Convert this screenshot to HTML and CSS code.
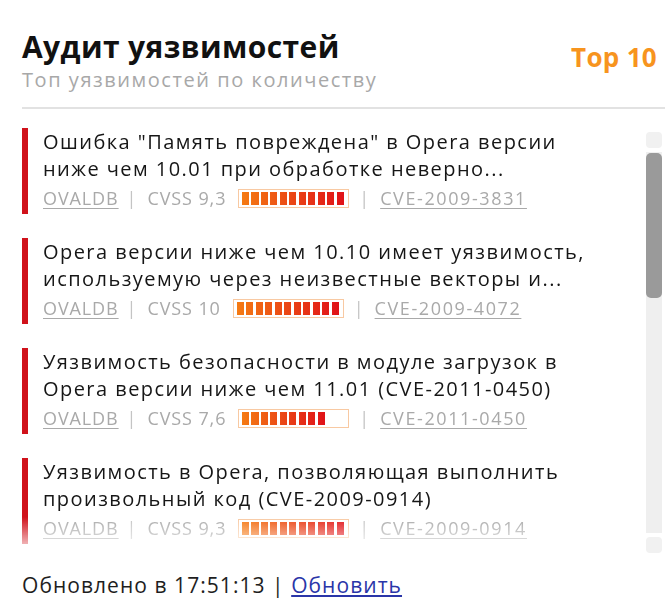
FILE: index.html
```html
<!DOCTYPE html>
<html lang="ru">
<head>
<meta charset="utf-8">
<title>Аудит уязвимостей</title>
<link rel="stylesheet" href="styles.css">
</head>
<body>
<div class="widget">
  <header class="head">
    <div class="head-titles">
      <h1 class="title">Аудит уязвимостей</h1>
      <div class="subtitle">Топ уязвимостей по количеству</div>
    </div>
    <div class="badge">Top 10</div>
  </header>

  <div class="body">
    <ul class="list">
      <li class="item">
        <div class="item-text">Ошибка "Память повреждена" в Opera версии ниже чем 10.01 при обработке неверно...</div>
        <div class="meta">
          <a class="link" href="#">OVALDB</a><span class="sep">|</span><span class="score">CVSS 9,3</span>
          <span class="gauge"><span class="fill" style="width:100%"></span></span>
          <span class="sep">|</span><a class="link cve" href="#">CVE-2009-3831</a>
        </div>
      </li>
      <li class="item">
        <div class="item-text">Opera версии ниже чем 10.10 имеет уязвимость, используемую через неизвестные векторы и...</div>
        <div class="meta">
          <a class="link" href="#">OVALDB</a><span class="sep">|</span><span class="score">CVSS 10</span>
          <span class="gauge"><span class="fill" style="width:100%"></span></span>
          <span class="sep">|</span><a class="link cve" href="#">CVE-2009-4072</a>
        </div>
      </li>
      <li class="item">
        <div class="item-text">Уязвимость безопасности в модуле загрузок в Opera версии ниже чем 11.01 (CVE-2011-0450)</div>
        <div class="meta">
          <a class="link" href="#">OVALDB</a><span class="sep">|</span><span class="score">CVSS 7,6</span>
          <span class="gauge"><span class="fill" style="width:81%"></span></span>
          <span class="sep">|</span><a class="link cve" href="#">CVE-2011-0450</a>
        </div>
      </li>
      <li class="item">
        <div class="item-text">Уязвимость в Opera, позволяющая выполнить произвольный код (CVE-2009-0914)</div>
        <div class="meta">
          <a class="link" href="#">OVALDB</a><span class="sep">|</span><span class="score">CVSS 9,3</span>
          <span class="gauge"><span class="fill" style="width:100%"></span></span>
          <span class="sep">|</span><a class="link cve" href="#">CVE-2009-0914</a>
        </div>
      </li>
    </ul>
    <div class="scrollbar">
      <div class="sb-btn"></div>
      <div class="sb-track"><div class="sb-thumb"></div></div>
      <div class="sb-btn"></div>
    </div>
  </div>

  <footer class="foot">Обновлено в 17:51:13 | <a class="refresh" href="#">Обновить</a></footer>
</div>
</body>
</html>
```
FILE: styles.css
```css
html, body {
  margin: 0;
  padding: 0;
  background: #fff;
}

.widget {
  width: 665px;
  height: 608px;
  font-family: "Open Sans", "DejaVu Sans", sans-serif;
  color: #1e1e1e;
  padding-left: 22px;
  box-sizing: border-box;
  overflow: hidden;
}

/* header: title block on the left, counter on the right */
.head {
  display: flex;
  justify-content: space-between;
  align-items: flex-start;
  padding-top: 28px;
  padding-right: 8px;
  padding-bottom: 13px;
  border-bottom: 2px solid #e2e2e2;
}

.title {
  margin: 0;
  font-size: 30px;
  line-height: 38px;
  font-weight: 700;
  color: #111;
  letter-spacing: 0.4px;
}

.subtitle {
  font-size: 20px;
  line-height: 28px;
  color: #a8a8a8;
  letter-spacing: 1.55px;
}

.badge {
  margin-top: 13px;
  font-size: 26px;
  line-height: 32px;
  font-weight: 700;
  color: #f7941e;
  letter-spacing: 0.3px;
}

.body {
  display: flex;
  margin-top: 16px;
  height: 428px;
}

.list {
  flex: 1;
  list-style: none;
  margin: 0;
  padding: 3px 0 0;
  overflow: hidden;
  -webkit-mask-image: linear-gradient(to bottom, #000 0, #000 392px, rgba(0,0,0,0.3) 420px, transparent 428px);
          mask-image: linear-gradient(to bottom, #000 0, #000 392px, rgba(0,0,0,0.3) 420px, transparent 428px);
}

.item {
  border-left: 6px solid #d0121b;
  padding-left: 15px;
  margin-bottom: 24px;
  height: 86px;
}

.item-text {
  max-width: 548px;
  font-size: 20px;
  line-height: 27px;
  letter-spacing: 1.45px;
  color: #161616;
}

.meta {
  display: flex;
  align-items: center;
  height: 32px;
  font-size: 18px;
  letter-spacing: 0.9px;
  color: #a9a9a9;
}

.link {
  color: #a9a9a9;
  text-decoration: underline;
  text-underline-offset: 3px;
}

.cve {
  letter-spacing: 1.6px;
}

.sep {
  margin: 0 10px 0 8px;
  color: #c4c4c4;
}

.score {
  margin-right: 12px;
}

/* CVSS gauge: segmented bar from orange to red */
.gauge {
  width: 103px;
  height: 13px;
  padding: 2px 3px;
  margin-right: 2px;
  border: 1px solid #f8c9a2;
  box-sizing: content-box;
  display: inline-flex;
}

.fill {
  display: block;
  height: 100%;
  background:
    repeating-linear-gradient(to right, transparent 0, transparent 7px, #fff 7px, #fff 9.5px),
    linear-gradient(to right, #f57a12, #e01018);
}

.scrollbar {
  width: 16px;
  margin-right: 3px;
  margin-top: 7px;
  display: flex;
  flex-direction: column;
  gap: 4px;
}

.sb-btn {
  height: 16px;
  border-radius: 4px;
  background: #f1f1f1;
}

.sb-track {
  height: 381px;
  background: #efefef;
}

.sb-thumb {
  height: 145px;
  margin-top: 1px;
  border-radius: 5px;
  background: #9a9a9a;
}

.foot {
  margin-top: 18px;
  font-size: 21px;
  line-height: 28px;
  letter-spacing: 1.05px;
  color: #1e1e1e;
}

.refresh {
  color: #2a35a8;
  text-decoration: underline;
}
```
